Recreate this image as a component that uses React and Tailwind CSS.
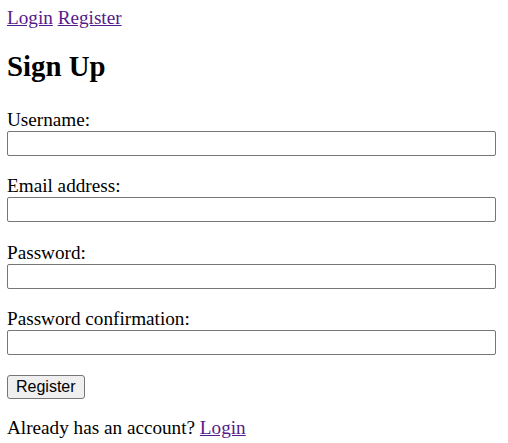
import React from 'react';

const fields = [
  { id: 'username', label: 'Username:', type: 'text' },
  { id: 'email', label: 'Email address:', type: 'email' },
  { id: 'password1', label: 'Password:', type: 'password' },
  { id: 'password2', label: 'Password confirmation:', type: 'password' },
];

const Field = ({ id, label, type }) => (
  <div className="flex flex-col">
    <label htmlFor={id} className="leading-[22px]">{label}</label>
    <input
      id={id}
      type={type}
      className="h-[25px] w-[489px] rounded-[2px] border border-[#767676] bg-white px-[2px] outline-none"
    />
  </div>
);

export default function App() {
  return (
    <div className="min-h-screen bg-white px-[7px] pt-[6.5px] text-[19.2px] text-black font-['Liberation_Serif',_'Times_New_Roman',_serif]">
      <nav className="leading-[22px]">
        <a href="#" className="text-[#551a8b] underline">Login</a>{' '}
        <a href="#" className="text-[#551a8b] underline">Register</a>
      </nav>

      <h2 className="mt-[21px] text-[28.8px] font-bold leading-[33px]">Sign Up</h2>

      <form className="mt-[26px] flex flex-col gap-[19.5px]" onSubmit={(e) => e.preventDefault()}>
        {fields.map((f) => (
          <Field key={f.id} {...f} />
        ))}
        <div className="flex">
          <button
            type="submit"
            className="h-[24px] rounded-[3px] border border-[#767676] bg-[#efefef] px-[8px] text-[16px] leading-none text-black font-['Liberation_Sans',_Arial,_sans-serif]"
          >
            Register
          </button>
        </div>
      </form>

      <p className="mt-[18px] leading-[22px]">
        Already has an account? <a href="#" className="text-[#551a8b] underline">Login</a>
      </p>
    </div>
  );
}
